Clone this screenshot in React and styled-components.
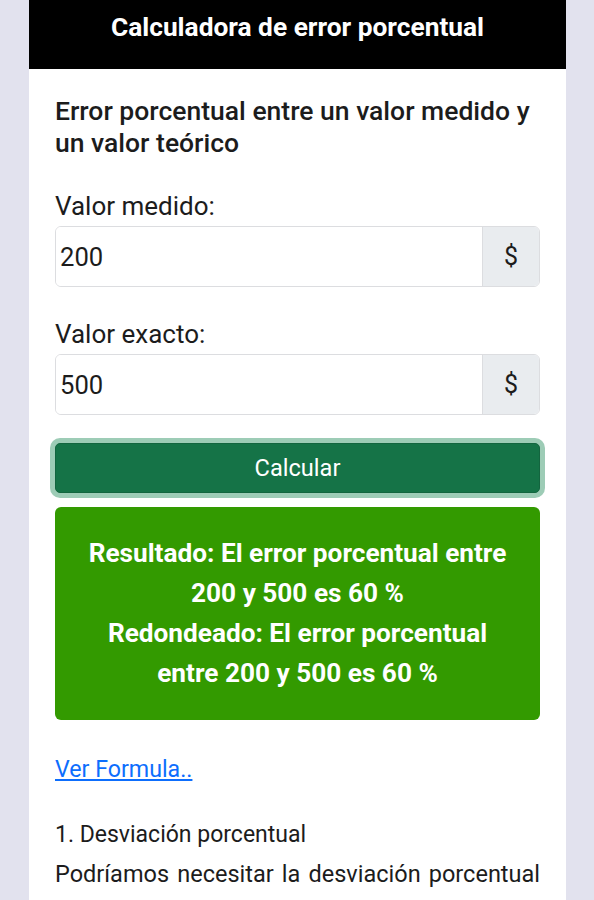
import React from "react";
import styled, { createGlobalStyle } from "styled-components";

const GlobalStyle = createGlobalStyle`
  html, body {
    margin: 0;
    padding: 0;
    background: #e2e2ee;
    font-family: Roboto, "Liberation Sans", sans-serif;
  }
  * { box-sizing: border-box; }
`;

export default function App() {
  return (
    <>
      <GlobalStyle />
      <Page>
        <Card>
          <Header>Calculadora de error porcentual</Header>
          <Body>
            <Title>Error porcentual entre un valor medido y un valor teórico</Title>
            <Form>
              <Field>
                <Label>Valor medido:</Label>
                <InputGroup>
                  <Input defaultValue="200" />
                  <Addon>$</Addon>
                </InputGroup>
              </Field>
              <Field>
                <Label>Valor exacto:</Label>
                <InputGroup>
                  <Input defaultValue="500" />
                  <Addon>$</Addon>
                </InputGroup>
              </Field>
              <Button>Calcular</Button>
            </Form>
            <Result>
              Resultado: El error porcentual entre 200 y 500 es 60 %
              <br />
              Redondeado: El error porcentual entre 200 y 500 es 60 %
            </Result>
            <FormulaLink href="#">Ver Formula..</FormulaLink>
            <SectionTitle>1. Desviación porcentual</SectionTitle>
            <Paragraph>
              Podríamos necesitar la desviación porcentual para saber cuánto se
              aleja un valor de otro valor de referencia.
            </Paragraph>
          </Body>
        </Card>
      </Page>
    </>
  );
}

const Page = styled.div`
  height: 900px;
  overflow: hidden;
  padding: 0 28px 0 29px;
`;

const Card = styled.div`
  background: #fff;
  min-height: 900px;
`;

const Header = styled.div`
  background: #000;
  color: #fff;
  height: 69px;
  padding-top: 12px;
  text-align: center;
  font-size: 26.3px;
  line-height: 30px;
  font-weight: 700;
`;

const Body = styled.div`
  padding: 26px 26px 0 26px;
`;

const Title = styled.h1`
  margin: 0 0 28px;
  font-size: 26.5px;
  font-weight: 500;
  line-height: 32px;
  color: #1c1c1c;
`;

const Form = styled.div`
  display: flex;
  flex-direction: column;
  gap: 28px;
`;

const Field = styled.div`
  display: flex;
  flex-direction: column;
`;

const Label = styled.div`
  padding-top: 3px;
  margin-bottom: 4px;
  font-size: 26px;
  line-height: 32px;
  color: #1c1c1c;
`;

const InputGroup = styled.div`
  display: flex;
  height: 61px;
  border: 1px solid #dcdde0;
  border-radius: 6px;
  overflow: hidden;
`;

const Input = styled.input`
  flex: 1;
  min-width: 0;
  border: none;
  outline: none;
  padding: 0 4px;
  font-family: Roboto, "Liberation Sans", sans-serif;
  font-size: 25.6px;
  color: #1c1c1c;
  background: #fff;
`;

const Addon = styled.div`
  width: 57px;
  display: flex;
  align-items: center;
  justify-content: center;
  background: #e9ecef;
  border-left: 1px solid #dcdde0;
  font-size: 25px;
  color: #1c1c1c;
`;

const Button = styled.button`
  display: block;
  width: 100%;
  height: 50px;
  border: 1px solid #13653f;
  border-radius: 5px;
  background: #157347;
  color: #fff;
  font-family: Roboto, "Liberation Sans", sans-serif;
  font-size: 23.6px;
  box-shadow: 0 0 0 5px rgba(60, 153, 110, 0.5);
  cursor: pointer;
`;

const Result = styled.div`
  margin-top: 14px;
  background: #339a00;
  color: #fff;
  border-radius: 6px;
  padding: 26px 26px 27px;
  text-align: center;
  font-size: 26.2px;
  font-weight: 700;
  line-height: 40px;
`;

const FormulaLink = styled.a`
  display: inline-block;
  margin-top: 35px;
  color: #0d6efd;
  font-size: 23.2px;
  line-height: 28px;
  text-decoration: underline;
`;

const SectionTitle = styled.div`
  margin-top: 38px;
  font-size: 23px;
  line-height: 28px;
  color: #1c1c1c;
`;

const Paragraph = styled.p`
  margin: 7px 0 0;
  font-size: 23.5px;
  line-height: 36px;
  color: #1c1c1c;
  text-align: justify;
`;
